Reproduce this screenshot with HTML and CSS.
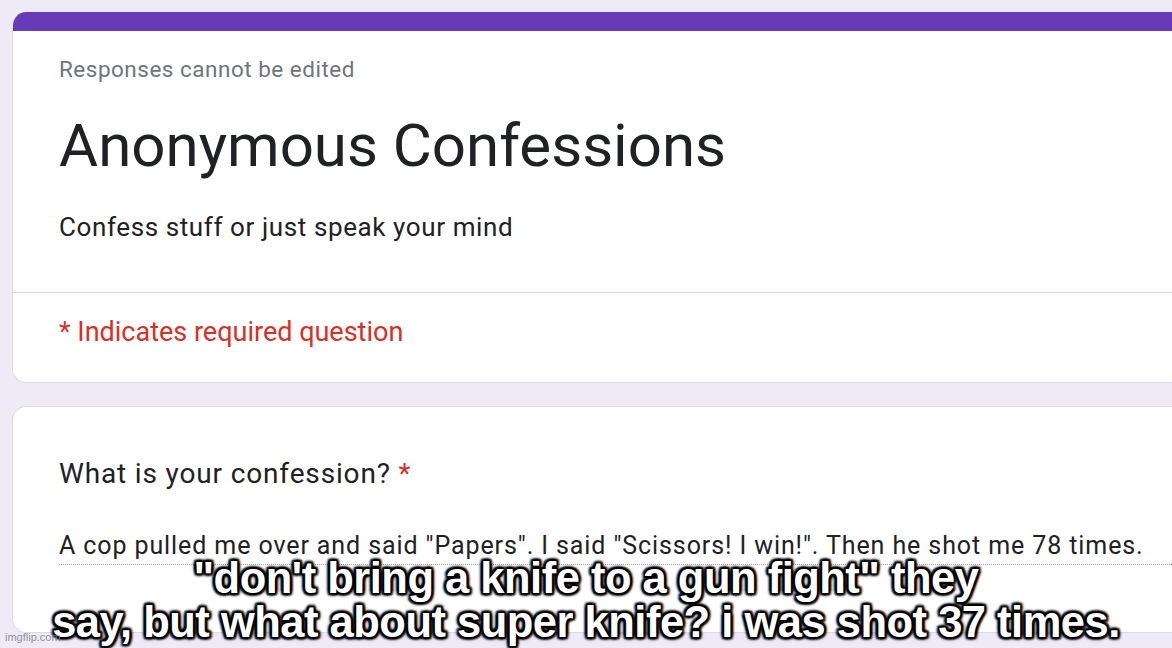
FILE: index.html
```html
<!DOCTYPE html>
<html>
<head>
<meta charset="utf-8">
<link rel="stylesheet" href="styles.css">
</head>
<body>
<div class="page">
  <div class="card header-card">
    <div class="accent"></div>
    <div class="header-main">
      <div class="note">Responses cannot be edited</div>
      <h1 class="title">Anonymous Confessions</h1>
      <div class="desc">Confess stuff or just speak your mind</div>
    </div>
    <div class="required-row">* Indicates required question</div>
  </div>
  <div class="card question-card">
    <div class="question">What is your confession? <span class="star">*</span></div>
    <div class="answer">A cop pulled me over and said "Papers". I said "Scissors! I win!". Then he shot me 78 times.</div>
  </div>
</div>
<div class="meme">"don't bring a knife to a gun fight" they<br>say, but what about super knife? i was shot 37 times.</div>
<div class="watermark">imgflip.com</div>
</body>
</html>
```
FILE: styles.css
```css
html, body {
  margin: 0;
  padding: 0;
  height: 648px;
  overflow: hidden;
}
body {
  background: #eeeaf8;
  font-family: Roboto, "Noto Sans", sans-serif;
  color: #202124;
  position: relative;
}
.page {
  padding: 12px 0 0 12px;
}
.card {
  background: #fff;
  border: 1px solid #dadce0;
  border-right: none;
  border-radius: 14px 0 0 14px;
  margin-right: -20px;
  box-sizing: border-box;
}
.header-card {
  height: 371px;
  overflow: hidden;
  border-top: none;
}
.accent {
  height: 19px;
  background: #673ab7;
  margin-left: -1px;
}
.header-main {
  padding: 25px 0 0 46px;
  height: 262px;
  box-sizing: border-box;
  border-bottom: 1px solid #dadce0;
}
.note {
  font-size: 22.5px;
  letter-spacing: 0.5px;
  color: #70757a;
  line-height: 26px;
}
.title {
  margin: 31px 0 0 0;
  font-size: 60px;
  font-weight: 400;
  line-height: 66px;
  letter-spacing: 0;
}
.desc {
  margin-top: 33px;
  font-size: 26px;
  letter-spacing: 0.6px;
  line-height: 30px;
}
.required-row {
  padding: 23px 0 0 46px;
  font-size: 27px;
  color: #d93025;
  line-height: 32px;
}
.question-card {
  margin-top: 23px;
  height: 227px;
  padding: 49px 0 0 46px;
}
.question {
  font-size: 28px;
  letter-spacing: 0.85px;
  line-height: 36px;
}
.star {
  color: #d93025;
}
.answer {
  margin-top: 39px;
  font-size: 25px;
  letter-spacing: 0.9px;
  line-height: 30px;
  padding-bottom: 3px;
  border-bottom: 1px dotted #9aa0a6;
  white-space: nowrap;
}
.meme {
  position: absolute;
  left: 0;
  right: 0;
  top: 556px;
  text-align: center;
  font-family: "Liberation Sans", Arial, sans-serif;
  font-weight: 700;
  font-size: 43.5px;
  line-height: 44px;
  color: #fff;
  letter-spacing: -0.5px;
  text-shadow:
    2px 2px 2px #000, -2px -2px 2px #000, 2px -2px 2px #000, -2px 2px 2px #000,
    0 2px 3px #000, 0 -2px 3px #000, 2px 0 3px #000, -2px 0 3px #000,
    0 0 5px #000;
}
.watermark {
  position: absolute;
  left: 5px;
  top: 631px;
  font-family: "Liberation Sans", Arial, sans-serif;
  font-size: 11px;
  color: rgba(120, 120, 120, 0.8);
}
```
